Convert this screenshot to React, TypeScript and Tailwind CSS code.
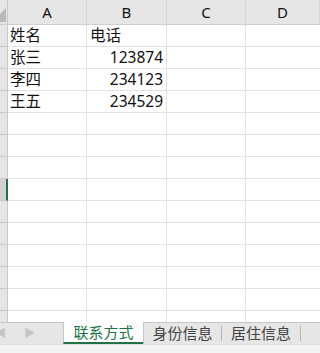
import React from 'react';

const font = { fontFamily: '"Noto Sans", "Noto Sans CJK SC", "Liberation Sans", sans-serif' };

const cols = ['A', 'B', 'C', 'D'];
const data = [
  ['姓名', '电话'],
  ['张三', '123874'],
  ['李四', '234123'],
  ['王五', '234529'],
];

export default function App() {
  const rows = Array.from({ length: 14 }, (_, i) => i);

  return (
    <div
      className="w-[320px] h-[353px] overflow-hidden flex flex-col bg-white text-[#111]"
      style={font}
    >
      {/* grid */}
      <div className="h-[322px] overflow-hidden">
        <div className="grid grid-cols-[8px_79px_80px_79px_74px] h-[25px] bg-[#e6e6e6] border-b border-[#cfcfcf]">
          <div className="relative border-r border-[#c8c8c8] overflow-hidden">
            <div className="absolute right-[1px] bottom-[2px] w-0 h-0 border-l-[14px] border-l-transparent border-b-[14px] border-b-[#b9b9b9]" />
          </div>
          {cols.map((c) => (
            <div
              key={c}
              className="flex items-center justify-center border-r border-[#d4d4d4] text-[15px] leading-none pt-[1px]"
            >
              {c}
            </div>
          ))}
        </div>
        {rows.map((r) => {
          const selected = r === 7;
          const d = data[r];
          return (
            <div key={r} className="grid grid-cols-[8px_79px_80px_79px_74px] h-[22px]">
              <div
                className={
                  selected
                    ? 'bg-[#d2d2d2] border-r-2 border-[#217346] border-b border-b-[#c8c8c8]'
                    : 'bg-[#e6e6e6] border-r border-[#c8c8c8] border-b border-b-[#c8c8c8]'
                }
              />
              <div className="flex items-center px-[2px] border-r border-b border-[#e1e1e1] text-[15.5px] leading-none">
                {d ? d[0] : ''}
              </div>
              <div
                className={`flex items-center px-[3px] border-r border-b border-[#e1e1e1] text-[15.5px] leading-none ${
                  r > 0 ? 'justify-end' : ''
                }`}
              >
                {d ? d[1] : ''}
              </div>
              <div className="border-r border-b border-[#e1e1e1]" />
              <div className="border-b border-[#e1e1e1]" />
            </div>
          );
        })}
      </div>

      {/* sheet tabs */}
      <div className="h-[31px] flex flex-col bg-[#f3f3f3]">
        <div className="h-[22px] flex items-stretch bg-[#e6e6e6] border-t border-[#c6c6c6]">
          <div className="w-[63px] flex items-center text-[11px] text-[#c4c4c4] overflow-hidden">
            <span className="-ml-[5px]">◀</span>
            <span className="ml-[18px]">▶</span>
          </div>
          <div className="w-[80px] -mt-[1px] bg-white border-l border-[#c6c6c6] border-b-2 border-b-[#217346] flex items-center justify-center text-[15px] text-[#217346] leading-none">
            联系方式
          </div>
          <div className="w-[78px] flex items-center justify-center text-[15px] text-[#444] leading-none border-l border-[#c6c6c6]">
            身份信息
          </div>
          <div className="w-[1px] my-[3px] bg-[#b5b5b5]" />
          <div className="w-[78px] flex items-center justify-center text-[15px] text-[#444] leading-none">
            居住信息
          </div>
          <div className="w-[1px] my-[3px] bg-[#b5b5b5]" />
        </div>
        <div className="flex-1 border-t border-[#e0e0e0]" />
      </div>
    </div>
  );
}
